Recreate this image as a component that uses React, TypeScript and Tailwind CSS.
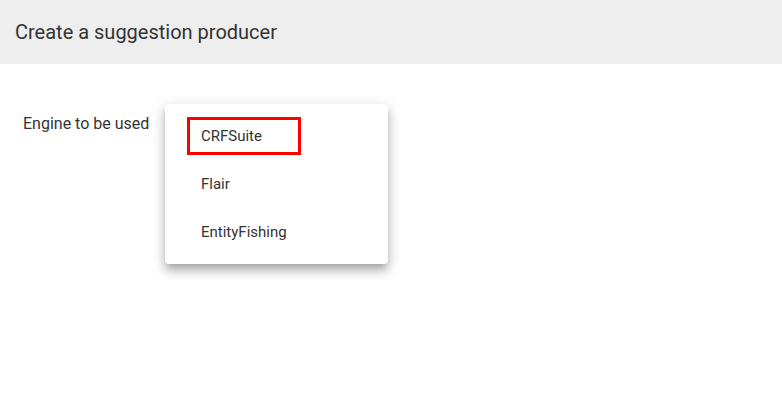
import React from "react";

export default function App() {
  const items = ["CRFSuite", "Flair", "EntityFishing"];
  return (
    <div className="w-[782px] h-[411px] bg-white text-[#333333]" style={{ fontFamily: "Roboto, sans-serif" }}>
      <div className="h-[64px] bg-[#eeeeee] flex items-center pl-[15px]">
        <span className="text-[20px] leading-none text-[#333333]">Create a suggestion producer</span>
      </div>
      <div className="relative">
        <div className="pl-[23px] pt-[50px] text-[16px] leading-[19px] text-[#333333]">Engine to be used</div>
        <div className="absolute left-[165px] top-[40px] w-[223px] bg-white rounded-[4px] py-[8px] shadow-[0_5px_6px_-3px_rgba(0,0,0,0.2),0_8px_10px_1px_rgba(0,0,0,0.14),0_3px_14px_2px_rgba(0,0,0,0.12)]">
          {items.map((it, i) => (
            <div key={it} className="relative h-[48px] flex items-center pl-[36px] text-[15px] text-[#333333]">
              {i === 0 && (
                <div className="absolute left-[22px] top-[5px] w-[114px] h-[38px] border-[3px] border-[#ff0000]" />
              )}
              <span className="relative">{it}</span>
            </div>
          ))}
        </div>
      </div>
    </div>
  );
}
